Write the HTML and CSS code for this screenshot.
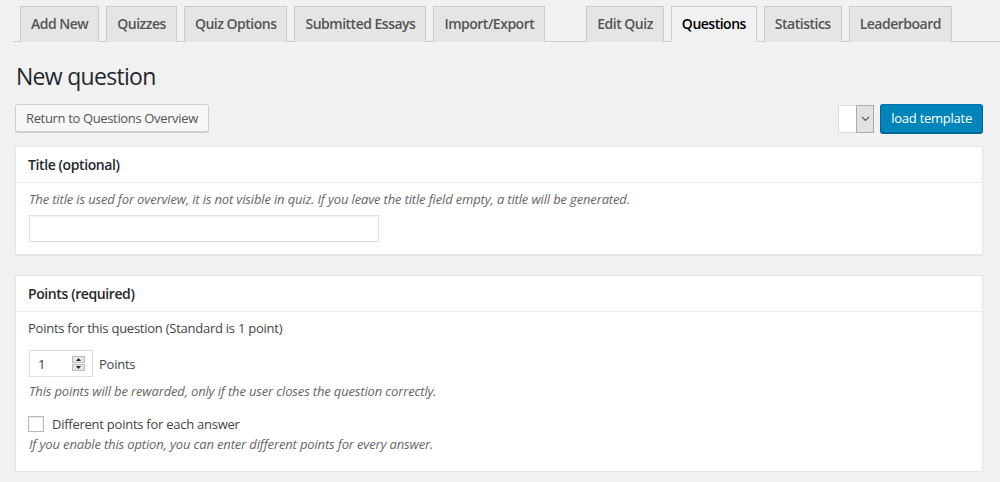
FILE: index.html
```html
<!DOCTYPE html>
<html lang="en">
<head>
<meta charset="UTF-8">
<meta name="viewport" content="width=device-width, initial-scale=1.0">
<title>New question</title>
<link rel="stylesheet" href="styles.css">
</head>
<body>
<div class="wrap">
    <nav class="nav-tab-wrapper">
        <a class="nav-tab" href="#">Add New</a>
        <a class="nav-tab" href="#">Quizzes</a>
        <a class="nav-tab" href="#">Quiz Options</a>
        <a class="nav-tab" href="#">Submitted Essays</a>
        <a class="nav-tab" href="#">Import/Export</a>
        <a class="nav-tab nav-tab-split" href="#">Edit Quiz</a>
        <a class="nav-tab nav-tab-active" href="#">Questions</a>
        <a class="nav-tab" href="#">Statistics</a>
        <a class="nav-tab" href="#">Leaderboard</a>
    </nav>

    <h1>New question</h1>

    <div class="toolbar">
        <a class="button" href="#">Return to Questions Overview</a>
        <div class="template-box">
            <div class="select">
                <span class="select-value"></span>
                <span class="select-arrow">
                    <svg width="9" height="6" viewBox="0 0 9 6"><path d="M1 1l3.5 3.5L8 1" fill="none" stroke="#555" stroke-width="1.1"/></svg>
                </span>
            </div>
            <button class="button-primary">load template</button>
        </div>
    </div>

    <div class="postbox">
        <h2 class="hndle">Title (optional)</h2>
        <div class="inside">
            <p class="description">The title is used for overview, it is not visible in quiz. If you leave the title field empty, a title will be generated.</p>
            <input type="text" class="title-input">
        </div>
    </div>

    <div class="postbox">
        <h2 class="hndle">Points (required)</h2>
        <div class="inside inside-points">
            <p class="intro">Points for this question (Standard is 1 point)</p>
            <div class="points-row">
                <div class="number-input">
                    <span class="number-value">1</span>
                    <span class="spinner">
                        <span class="spin-btn"><svg width="5" height="3" viewBox="0 0 5 3"><path d="M2.5 0L5 3H0z" fill="#222"/></svg></span>
                        <span class="spin-btn"><svg width="5" height="3" viewBox="0 0 5 3"><path d="M0 0h5L2.5 3z" fill="#222"/></svg></span>
                    </span>
                </div>
                <label>Points</label>
            </div>
            <p class="description">This points will be rewarded, only if the user closes the question correctly.</p>
            <label class="check-row"><span class="checkbox"></span>Different points for each answer</label>
            <p class="description">If you enable this option, you can enter different points for every answer.</p>
        </div>
    </div>
</div>
</body>
</html>
```

FILE: styles.css
```css
body {
    margin: 0;
    background: #f1f1f1;
    color: #444;
    font-family: "Open Sans", "Noto Sans", sans-serif;
    font-size: 13px;
    letter-spacing: -0.25px;
}

.wrap {
    padding: 0 17px 0 15px;
}

.nav-tab-wrapper {
    display: flex;
    margin: 0 -17px 0 -2px;
    padding-top: 6px;
    border-bottom: 1px solid #ccc;
}

.nav-tab {
    margin-left: 7px;
    margin-bottom: -1px;
    padding: 5px 10px;
    border: 1px solid #ccc;
    border-bottom: none;
    background: #e5e5e5;
    color: #555;
    font-size: 14px;
    font-weight: 600;
    line-height: 24px;
    letter-spacing: -0.5px;
    text-decoration: none;
}

.nav-tab-split {
    margin-left: 41px;
}

.nav-tab-active {
    background: #f1f1f1;
    color: #000;
    border-bottom: 1px solid #f1f1f1;
}

h1 {
    margin: 20px 0 0 1px;
    color: #23282d;
    font-size: 23px;
    font-weight: 400;
    line-height: 29px;
    letter-spacing: -0.7px;
}

.toolbar {
    display: flex;
    justify-content: space-between;
    align-items: flex-start;
    margin-top: 13px;
}

.button {
    display: inline-block;
    height: 26px;
    padding: 0 10px;
    border: 1px solid #ccc;
    border-radius: 3px;
    background: #f7f7f7;
    box-shadow: 0 1px 0 #ccc;
    color: #555;
    font-size: 13px;
    line-height: 26px;
    letter-spacing: -0.35px;
    text-decoration: none;
}

.template-box {
    display: flex;
    gap: 6px;
}

.select {
    display: flex;
    margin-top: 1px;
    height: 28px;
}

.select-value {
    width: 17px;
    background: #fff;
    border: 1px solid #ddd;
    border-right: none;
}

.select-arrow {
    display: flex;
    align-items: center;
    justify-content: center;
    width: 16px;
    background: #e1e1e1;
    border: 1px solid #adadad;
}

.button-primary {
    height: 29px;
    padding: 0 10px 1px;
    border: 1px solid #006799;
    border-top-color: #0073aa;
    border-radius: 3px;
    background: #0085ba;
    box-shadow: 0 1px 0 #006799;
    color: #fff;
    font-family: inherit;
    font-size: 13px;
    letter-spacing: -0.25px;
}

.postbox {
    margin-top: 13px;
    border: 1px solid #e5e5e5;
    background: #fff;
    box-shadow: 0 1px 1px rgba(0, 0, 0, 0.04);
}

.postbox + .postbox {
    margin-top: 20px;
}

.hndle {
    margin: 0;
    padding: 8px 12px;
    border-bottom: 1px solid #eee;
    color: #23282d;
    font-size: 14px;
    font-weight: 600;
    line-height: 19px;
    letter-spacing: -0.4px;
}

.inside {
    padding: 6px 12px 12px 13px;
}

.inside-points {
    padding-bottom: 17px;
}

.description {
    margin: 0;
    color: #666;
    font-style: italic;
    line-height: 20px;
    letter-spacing: -0.15px;
}

.title-input {
    display: block;
    width: 350px;
    height: 27px;
    margin-top: 6px;
    border: 1px solid #ddd;
    box-shadow: inset 0 1px 2px rgba(0, 0, 0, 0.07);
    box-sizing: border-box;
}

.intro {
    margin: 0 0 0 -1px;
    line-height: 20px;
}

.points-row {
    display: flex;
    align-items: center;
    gap: 6px;
    margin: 12px 0 4px;
}

.number-input {
    display: flex;
    align-items: center;
    justify-content: space-between;
    width: 64px;
    height: 27px;
    padding: 0 7px 0 8px;
    border: 1px solid #ddd;
    box-sizing: border-box;
    color: #32373c;
}

.spinner {
    display: flex;
    flex-direction: column;
    gap: 1px;
}

.spin-btn {
    display: flex;
    align-items: center;
    justify-content: center;
    width: 13px;
    height: 7px;
    background: #e5e5e5;
    border: 1px solid #bbb;
    box-sizing: border-box;
}

.check-row {
    display: flex;
    align-items: center;
    gap: 8px;
    margin: 15px 0 2px -1px;
    line-height: 16px;
}

.checkbox {
    width: 16px;
    height: 16px;
    border: 1px solid #b4b9be;
    background: #fff;
    box-shadow: inset 0 1px 2px rgba(0, 0, 0, 0.1);
    box-sizing: border-box;
}
```
